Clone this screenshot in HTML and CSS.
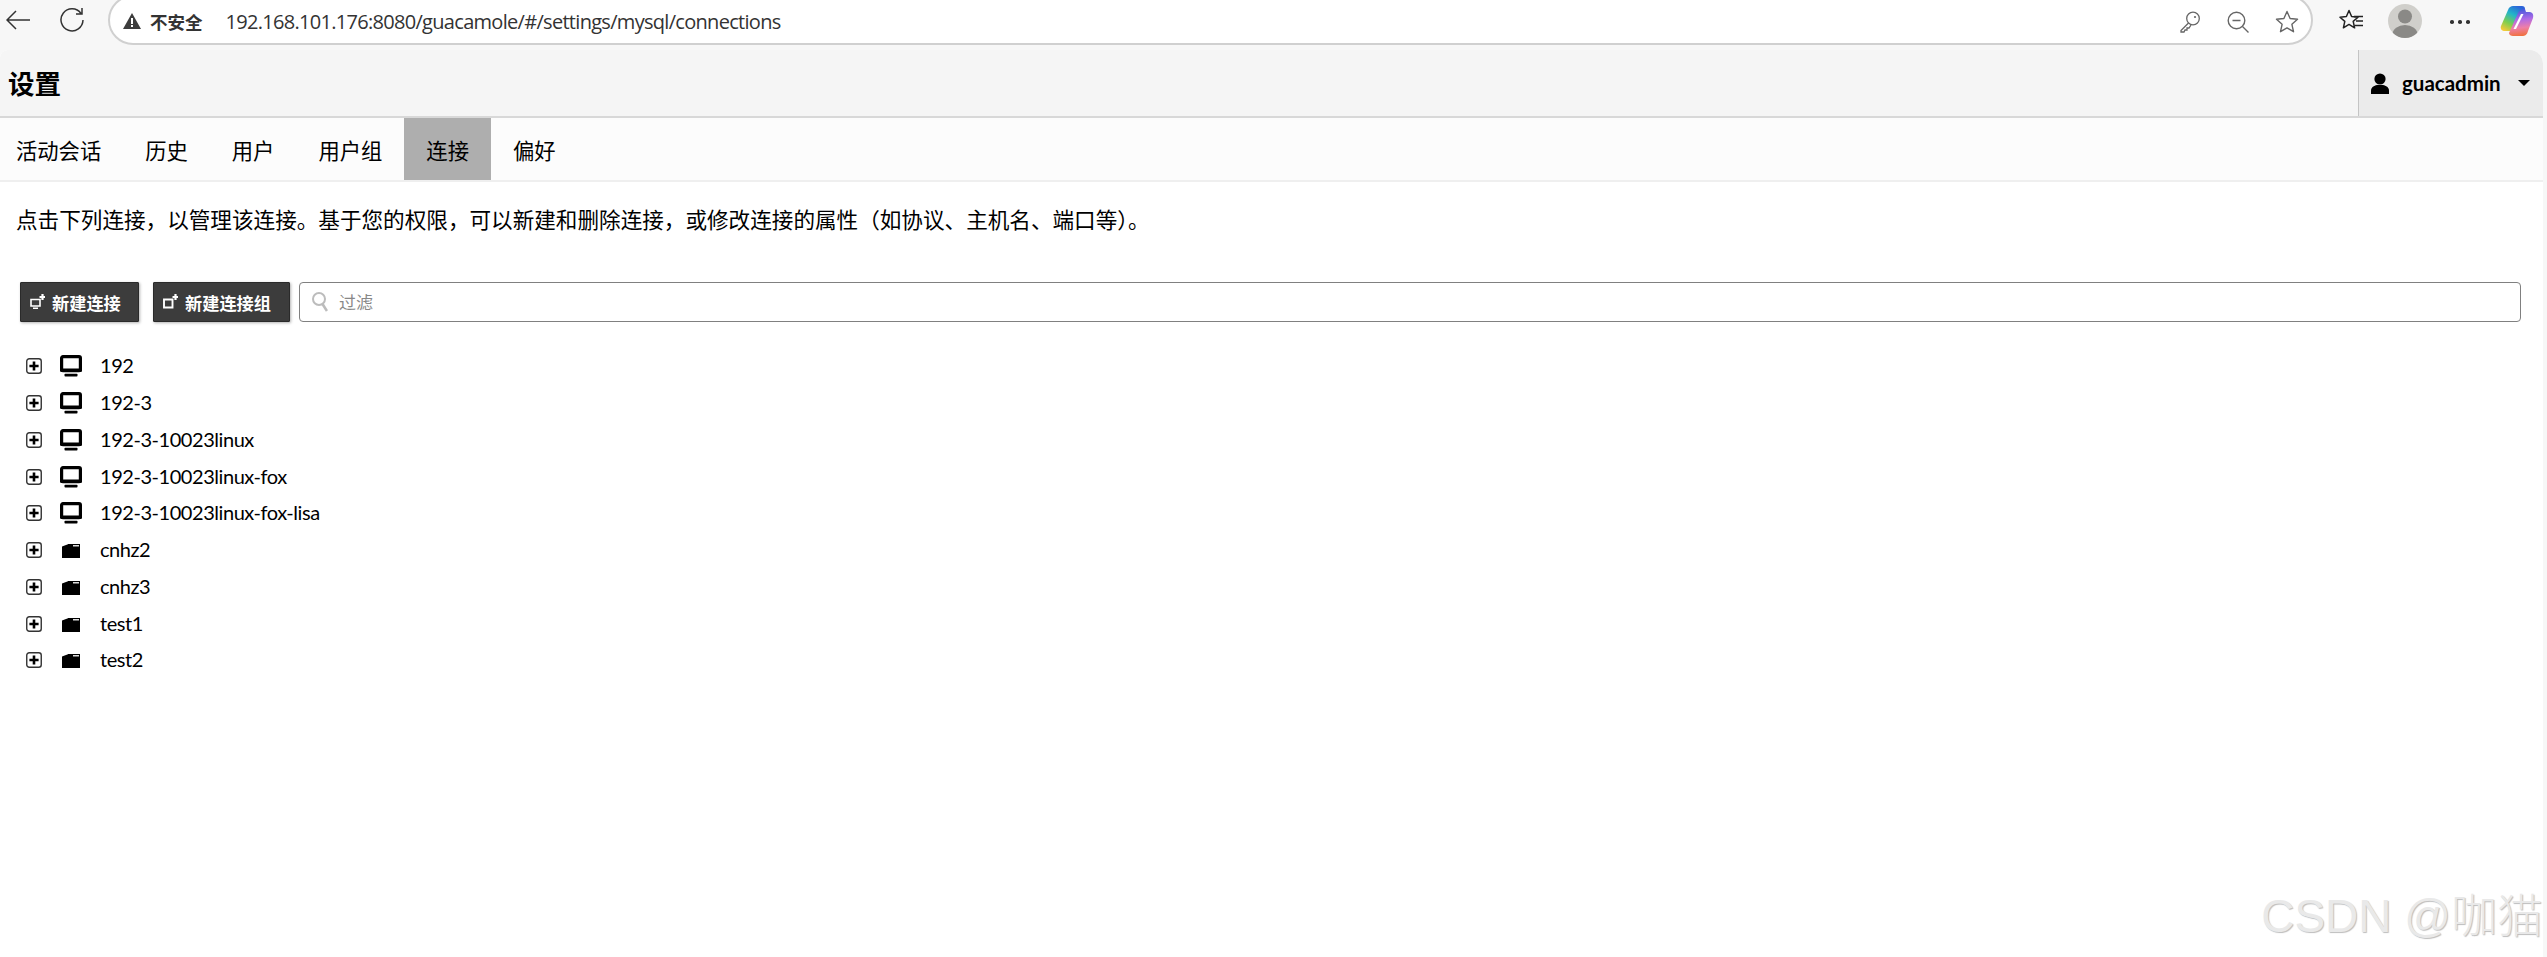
FILE: index.html
```html
<!DOCTYPE html>
<html lang="zh-CN">
<head>
<meta charset="utf-8">
<title>设置</title>
<link rel="stylesheet" href="styles.css">
</head>
<body>
<svg class="defs" width="0" height="0" aria-hidden="true">
  <defs>
    <symbol id="plus" viewBox="0 0 16 16">
      <rect x="0.75" y="0.75" width="14.5" height="14.5" rx="2.5" fill="#fff" stroke="#333" stroke-width="1.4"/>
      <path d="M8 3.4v9.2M3.4 8h9.2" stroke="#000" stroke-width="2.6" fill="none"/>
    </symbol>
    <symbol id="monitor" viewBox="0 0 22 22">
      <rect x="1.6" y="1.6" width="18.800" height="14" rx="1.4" fill="#fff" stroke="#000" stroke-width="3.2"/>
      <rect x="0" y="13.500" width="22" height="3.500" rx="1.500" fill="#000"/>
      <rect x="4.500" y="18.800" width="13" height="2.800" rx="0.800" fill="#000"/>
    </symbol>
    <symbol id="folder" viewBox="0 0 18 14">
      <path d="M0 2.500L6 .3V0h12v14H0z" fill="#000"/>
      <path d="M11 1h6v1.500h-6z" fill="#ddd"/>
    </symbol>
  </defs>
</svg>

<header class="browser">
  <svg class="ico back" viewBox="0 0 24 20"><path d="M24 10H1M10 1l-9 9 9 9" fill="none" stroke="#333" stroke-width="1.5"/></svg>
  <svg class="ico reload" viewBox="0 0 24 24"><path d="M21 5.500A11 11 0 1 0 23 12M22 0v6h-6" fill="none" stroke="#333" stroke-width="1.5"/></svg>
  <div class="omnibox">
    <svg class="warn" viewBox="0 0 18 16"><path d="M9 0l9 16H0z" fill="#3d3d3d"/><path d="M8 5h2v6H8zM8 12h2v2H8z" fill="#fff"/></svg>
    <span class="insecure">不安全</span>
    <span class="url">192.168.101.176:8080/guacamole/#/settings/mysql/connections</span>
    <span class="omni-icons">
      <svg class="ico-md" viewBox="0 0 22 22"><circle cx="14" cy="7.500" r="6.300" fill="none" stroke="#666" stroke-width="1.300"/><path d="M9.500 12L2 19.500V21h3l1-2h2v-2h2l2-3" fill="none" stroke="#666" stroke-width="1.300"/><circle cx="16" cy="6" r="1.100" fill="#666"/></svg>
      <svg class="ico-md" viewBox="0 0 22 22"><circle cx="9.500" cy="9.500" r="8.300" fill="none" stroke="#666" stroke-width="1.400"/><path d="M5.500 9.500h8M15.500 15.500l6 6" fill="none" stroke="#666" stroke-width="1.400"/></svg>
      <svg class="ico-lg" viewBox="0 0 24 24"><path d="M12 1.500l3.100 7 7.400.8-5.600 5 1.600 7.400-6.500-3.800-6.500 3.800 1.600-7.400-5.600-5 7.400-.8z" fill="none" stroke="#666" stroke-width="1.400" stroke-linejoin="round"/></svg>
    </span>
  </div>
  <svg class="ico-lg fav" viewBox="0 0 24 22"><path d="M10 1.500l2.600 6 6.400.7-4.800 4.200 1.400 6.400L10 15.400l-5.600 3.400 1.400-6.400L1 8.200l6.400-.7z" fill="none" stroke="#222" stroke-width="1.500" stroke-linejoin="round"/><path d="M15 7.500h9M17 12h7M15.500 16.500h8.500" fill="none" stroke="#222" stroke-width="1.300"/></svg>
  <svg class="avatar" viewBox="0 0 34 34"><defs><clipPath id="avclip"><circle cx="17" cy="17" r="17"/></clipPath></defs><circle cx="17" cy="17" r="17" fill="#d0cfcb"/><g clip-path="url(#avclip)"><circle cx="17" cy="12.500" r="7" fill="#8a8986"/><ellipse cx="17" cy="30" rx="12.500" ry="9" fill="#8a8986"/></g></svg>
  <span class="dots"><i></i><i></i><i></i></span>
  <svg class="copilot" viewBox="0 0 34 32">
    <defs>
      <linearGradient id="cpa" x1="0.7" y1="0" x2="0.2" y2="1"><stop offset="0" stop-color="#2b63d9"/><stop offset="0.35" stop-color="#22b5c9"/><stop offset="0.7" stop-color="#7fce4e"/><stop offset="1" stop-color="#f3c93a"/></linearGradient>
      <linearGradient id="cpb" x1="0.4" y1="0" x2="0.5" y2="1"><stop offset="0" stop-color="#3a58dc"/><stop offset="0.4" stop-color="#b06ae6"/><stop offset="0.7" stop-color="#ee7fa8"/><stop offset="1" stop-color="#f0703a"/></linearGradient>
    </defs>
    <path d="M13 1h9c2 0 3 1 3 3L16 22c-1 3-3 4-5 4H5c-3 0-5-2-4-5L8 5c1-3 3-4 5-4z" fill="url(#cpa)"/>
    <path d="M25 4l1 3h3c3 0 5 2 4 6l-5 13c-1 4-3 5-6 5h-9c-2 0-4-1-4-3l9-20c1-2 4-5 7-4z" fill="url(#cpb)"/>
    <path d="M21 9h2.500L16 24h-2.500z" fill="#fff"/>
  </svg>
</header>

<main class="page">
  <div class="titlebar">
    <h1 class="title">设置</h1>
    <div class="user">
      <svg class="user-ico" viewBox="0 0 18 21"><circle cx="9" cy="6" r="5.600" fill="#000"/><path d="M0 21v-3.500c0-3 3-5 6-5.500h6c3 .5 6 2.500 6 5.500V21z" fill="#000"/></svg>
      <span class="user-name">guacadmin</span>
      <span class="caret"></span>
    </div>
  </div>
  <nav class="tabs">
    <a class="tab tab-first">活动会话</a>
    <a class="tab">历史</a>
    <a class="tab">用户</a>
    <a class="tab">用户组</a>
    <a class="tab active">连接</a>
    <a class="tab">偏好</a>
  </nav>
  <p class="intro">点击下列连接，以管理该连接。基于您的权限，可以新建和删除连接，或修改连接的属性（如协议、主机名、端口等）。</p>
  <div class="actions">
    <button class="btn btn-conn">
      <svg class="btn-ico" viewBox="0 0 15 15"><path d="M1 5.500h9v6.500H1zM3 14.300h5" fill="none" stroke="#fff" stroke-width="1.600"/><path d="M12.500 0v6M9.500 3h5.500" stroke="#fff" stroke-width="2.200"/></svg>
      新建连接
    </button>
    <button class="btn btn-group">
      <svg class="btn-ico" viewBox="0 0 15 15"><path d="M1 5.500h8.500v8H1z" fill="none" stroke="#fff" stroke-width="1.900"/><path d="M12.500 0v6M9.500 3h5.500" stroke="#fff" stroke-width="2.200"/></svg>
      新建连接组
    </button>
    <label class="filter">
      <svg class="filter-ico" viewBox="0 0 16 22"><circle cx="7" cy="8" r="6" fill="none" stroke="#bcbcbc" stroke-width="2"/><path d="M10.500 13l4.500 7" stroke="#bcbcbc" stroke-width="2.600"/></svg>
      <span class="filter-ph">过滤</span>
    </label>
  </div>
  <ul class="tree">
    <li class="row"><svg class="exp"><use href="#plus"/></svg><span class="kind"><svg class="mon"><use href="#monitor"/></svg></span><span class="name">192</span></li>
    <li class="row"><svg class="exp"><use href="#plus"/></svg><span class="kind"><svg class="mon"><use href="#monitor"/></svg></span><span class="name">192-3</span></li>
    <li class="row"><svg class="exp"><use href="#plus"/></svg><span class="kind"><svg class="mon"><use href="#monitor"/></svg></span><span class="name">192-3-10023linux</span></li>
    <li class="row"><svg class="exp"><use href="#plus"/></svg><span class="kind"><svg class="mon"><use href="#monitor"/></svg></span><span class="name">192-3-10023linux-fox</span></li>
    <li class="row"><svg class="exp"><use href="#plus"/></svg><span class="kind"><svg class="mon"><use href="#monitor"/></svg></span><span class="name">192-3-10023linux-fox-lisa</span></li>
    <li class="row"><svg class="exp"><use href="#plus"/></svg><span class="kind"><svg class="fld"><use href="#folder"/></svg></span><span class="name">cnhz2</span></li>
    <li class="row"><svg class="exp"><use href="#plus"/></svg><span class="kind"><svg class="fld"><use href="#folder"/></svg></span><span class="name">cnhz3</span></li>
    <li class="row"><svg class="exp"><use href="#plus"/></svg><span class="kind"><svg class="fld"><use href="#folder"/></svg></span><span class="name">test1</span></li>
    <li class="row"><svg class="exp"><use href="#plus"/></svg><span class="kind"><svg class="fld"><use href="#folder"/></svg></span><span class="name">test2</span></li>
  </ul>
  <div class="watermark">CSDN @咖猫</div>
</main>
</body>
</html>
```

FILE: styles.css
```css
* { box-sizing: border-box; }
html, body { height: 100%; }
body {
  margin: 0;
  background: #f7f7f7;
  font-family: Lato, "Noto Sans CJK SC", sans-serif;
  color: #000;
  display: flex;
  flex-direction: column;
  overflow: hidden;
}
.defs { position: absolute; }

/* Browser chrome */
.browser {
  height: 50px;
  flex: none;
  display: flex;
  align-items: center;
  overflow: hidden;
  padding-left: 6px;
}
.back { width: 24px; height: 20px; margin-top: -10px; flex: none; }
.reload { width: 24px; height: 24px; margin: -10px 0 0 30px; flex: none; }
.omnibox {
  width: 2205px;
  height: 50px;
  margin: -10px 0 0 24px;
  flex: none;
  background: #fff;
  border: 2px solid #d0d0d0;
  border-radius: 25px;
  display: flex;
  align-items: center;
  padding: 3px 12px 0 13px;
}
.warn { width: 18px; height: 16px; flex: none; margin-top: -1px; }
.insecure {
  font: 700 17.500px "Noto Sans CJK SC", sans-serif;
  color: #333;
  margin-left: 9px;
  line-height: 20px;
}
.url {
  font: 400 20px "Open Sans", sans-serif;
  color: #333;
  margin-left: 23px;
  letter-spacing: -0.700px;
  white-space: nowrap;
}
.omni-icons {
  margin-left: auto;
  display: flex;
  align-items: center;
  gap: 26px;
}
.ico-md { width: 22px; height: 22px; flex: none; }
.ico-lg { width: 24px; height: 24px; flex: none; }
.fav { margin: -10px 0 0 26px; }
.avatar { width: 34px; height: 34px; margin: -8px 0 0 25px; flex: none; }
.dots { display: flex; gap: 4.500px; margin: -6px 0 0 28px; flex: none; }
.dots i { width: 3.500px; height: 3.500px; border-radius: 50%; background: #333; }
.copilot { width: 34px; height: 32px; margin: -8px 0 0 30px; flex: none; }

/* Page */
.page {
  flex: 1;
  margin-right: 4px;
  background: #fff;
  border-radius: 8px 14px 0 0;
  overflow: hidden;
  position: relative;
  display: flex;
  flex-direction: column;
}
.titlebar {
  height: 68px;
  flex: none;
  background: #f5f5f5;
  border-bottom: 2px solid #d8d8d8;
  display: flex;
  align-items: stretch;
  justify-content: space-between;
}
.title {
  margin: 0 0 0 8px;
  font: 700 26.500px/66px "Noto Sans CJK SC", sans-serif;
}
.user {
  width: 185px;
  background: #ebebeb;
  border-left: 1px solid #c4c4c4;
  display: flex;
  align-items: center;
  padding-left: 12px;
}
.user-ico { width: 18px; height: 21px; flex: none; }
.user-name {
  margin-left: 13px;
  font: 700 20.500px Lato, sans-serif;
}
.caret {
  margin-left: 17px;
  width: 0;
  height: 0;
  border-left: 6px solid transparent;
  border-right: 6px solid transparent;
  border-top: 6px solid #000;
}
.tabs {
  height: 64px;
  flex: none;
  background: #fcfcfc;
  border-bottom: 2px solid #efefef;
  display: flex;
  font: 400 21.300px/63px "Noto Sans CJK SC", sans-serif;
}
.tab { padding: 0 22px; color: #000; }
.tab-first { padding-left: 16px; }
.active { background: #aeaeae; height: 62px; }
.intro {
  margin: 24px 0 0;
  padding-left: 16px;
  font: 400 21.600px/26px "Noto Sans CJK SC", sans-serif;
}
.actions {
  display: flex;
  margin: 50px 22px 0 20px;
  height: 40px;
  align-items: stretch;
}
.btn {
  background: #3c3c3c;
  color: #fff;
  border: 1px solid #2a2a2a;
  border-radius: 1px;
  box-shadow: 1px 1px 3px rgba(0, 0, 0, .3);
  font: 700 17.200px "Noto Sans CJK SC", sans-serif;
  display: flex;
  align-items: center;
  padding: 0;
}
.btn-conn { width: 119px; padding-left: 9px; }
.btn-group { width: 137px; margin-left: 14px; padding-left: 9px; }
.btn-ico { width: 15px; height: 15px; margin-right: 7px; flex: none; margin-top: -2px; }
.filter {
  flex: 1;
  margin-left: 9px;
  border: 1.500px solid #808080;
  border-radius: 4px;
  display: flex;
  align-items: center;
  padding-left: 12px;
  background: #fff;
}
.filter-ico { width: 16px; height: 22px; flex: none; }
.filter-ph { margin-left: 11px; font: 400 17px "Noto Sans CJK SC", sans-serif; color: #888; margin-top: -2px; }
.tree { list-style: none; margin: 26px 0 0; padding: 0 0 0 26px; }
.row {
  height: 36.750px;
  display: flex;
  align-items: center;
  font-size: 20px;
  letter-spacing: -0.450px;
}
.exp { width: 16px; height: 16px; flex: none; }
.kind { width: 58px; display: flex; justify-content: flex-start; padding-left: 18px; }
.mon { width: 22px; height: 22px; }
.fld { width: 18px; height: 14px; margin: 2px 0 0 2px; }
.name { line-height: 24px; white-space: nowrap; margin-top: -2px; }
.watermark {
  position: absolute;
  right: 0;
  bottom: 12px;
  font: 300 46px "Liberation Sans", "Noto Sans CJK SC", sans-serif;
  color: #e9e9e9;
  text-shadow: 1px 1px 1px #bdbdbd;
  white-space: nowrap;
}
```
